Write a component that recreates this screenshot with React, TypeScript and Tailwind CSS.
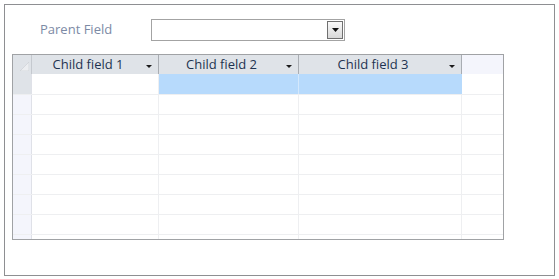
import React from "react";

const columns = [
  { label: "Child field 1", width: "w-[127px]" },
  { label: "Child field 2", width: "w-[140px]" },
  { label: "Child field 3", width: "w-[163px]" },
];

function SortArrow() {
  return (
    <svg width="6" height="3" viewBox="0 0 6 3" className="absolute right-[6px] top-[10px]">
      <path d="M0 0H6L3 3Z" fill="#1a1a1a" />
    </svg>
  );
}

function HeaderRow() {
  return (
    <div className="flex h-[19px] shrink-0">
      <div className="relative w-[19px] shrink-0 border-r border-[#c5c9cf] bg-[#dfe3e8]">
        <svg width="9" height="9" viewBox="0 0 9 9" className="absolute left-[7px] top-[7px]">
          <path d="M9 0V9H0Z" fill="#eceef1" stroke="#c9ccd2" strokeWidth="0.6" />
        </svg>
      </div>
      {columns.map((c) => (
        <div
          key={c.label}
          className={`relative ${c.width} shrink-0 border-r border-[#a9adb3] bg-[#dfe3e8] pr-[14px] text-center text-[13px] leading-[19px] text-[#1e3350]`}
        >
          {c.label}
          <SortArrow />
        </div>
      ))}
      <div className="flex-1 bg-[#f4f5fc]" />
    </div>
  );
}

function DataRow({ first }: { first?: boolean }) {
  return (
    <div className={`flex shrink-0 border-b border-[#eeeff1] ${first ? "h-[21px]" : "h-[20px]"}`}>
      <div className={`w-[19px] shrink-0 border-r border-[#dfe1e8] ${first ? "bg-[#dfe3e8]" : "bg-[#f4f5fc]"}`} />
      <div className="w-[127px] shrink-0 border-r border-[#eeeff1] bg-white" />
      <div className={`w-[140px] shrink-0 border-r ${first ? "border-[#d4e8fc] bg-[#b7dafc]" : "border-[#eeeff1] bg-white"}`} />
      <div className={`w-[163px] shrink-0 border-r ${first ? "border-[#b7dafc] bg-[#b7dafc]" : "border-[#eeeff1] bg-white"}`} />
      <div className="flex-1 bg-white" />
    </div>
  );
}

export default function App() {
  return (
    <div className="h-[279px] w-[559px] bg-white p-[4px] font-['Open_Sans',sans-serif]">
      <div className="flex h-[272px] w-[551px] flex-col border border-[#8e8f92] bg-white">
        <div className="mt-[14px] flex h-[22px] items-center pl-[35px]">
          <span className="mb-[3px] w-[111px] text-[13px] leading-[18px] text-[#7c8aa5]">Parent Field</span>
          <div className="flex h-[22px] w-[194px] border border-[#a3a3a3] bg-white p-px">
            <div className="flex-1" />
            <div className="flex w-[16px] items-center justify-center border border-[#707070] bg-gradient-to-b from-[#fafafa] to-[#d9d9d9]">
              <svg width="7" height="4" viewBox="0 0 7 4">
                <path d="M0 0H7L3.5 4Z" fill="#111" />
              </svg>
            </div>
          </div>
        </div>
        <div className="ml-[7px] mt-[13px] flex h-[186px] w-[492px] flex-col overflow-hidden border border-[#a0a2a5]">
          <HeaderRow />
          <DataRow first />
          {Array.from({ length: 8 }).map((_, i) => (
            <DataRow key={i} />
          ))}
        </div>
      </div>
    </div>
  );
}
